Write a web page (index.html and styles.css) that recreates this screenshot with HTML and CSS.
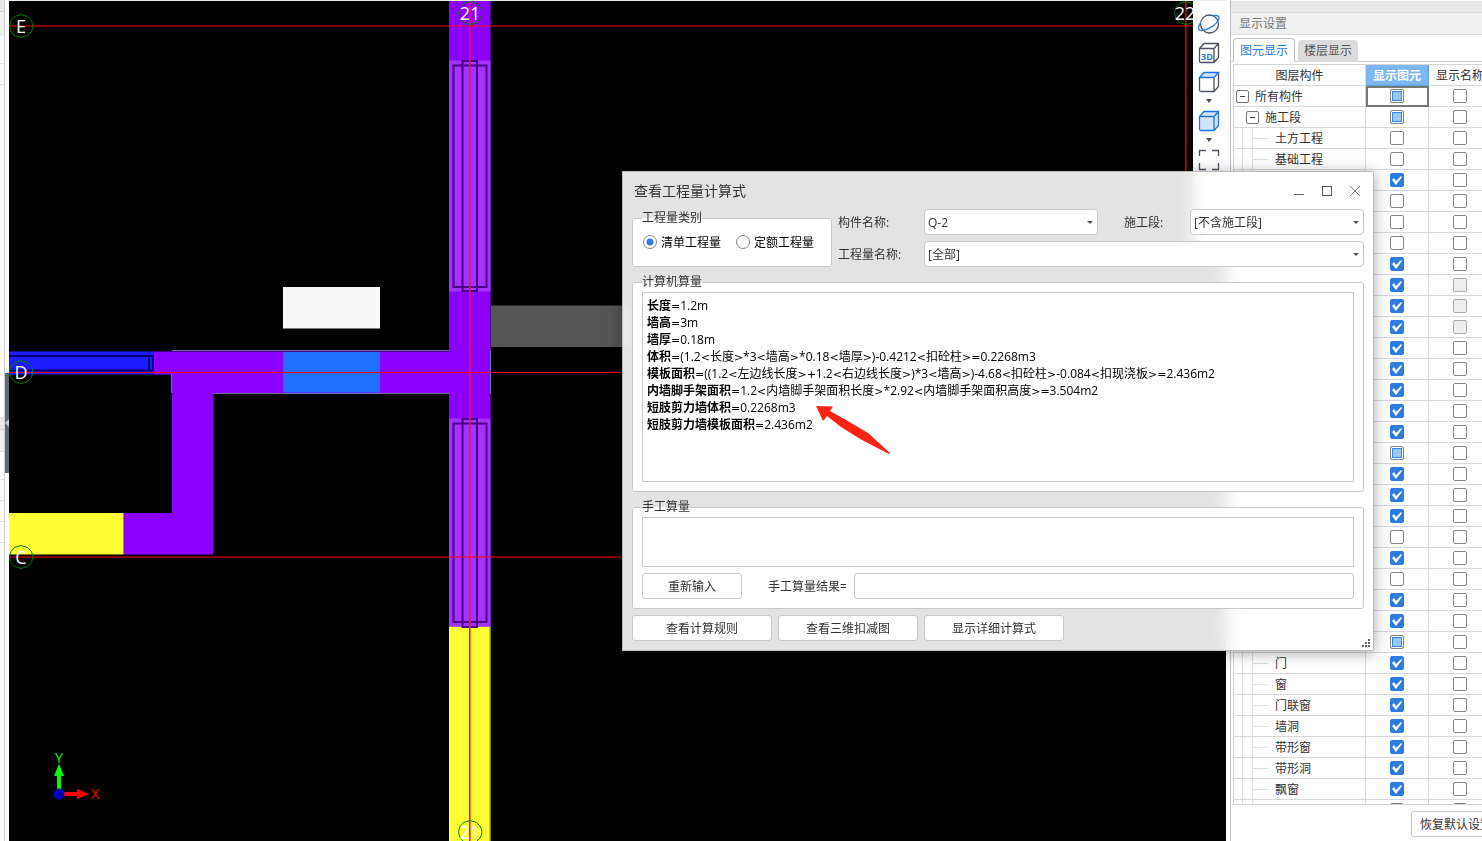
FILE: index.html
```html
<!DOCTYPE html>
<html lang="zh-CN">
<head>
<meta charset="utf-8">
<title>查看工程量计算式</title>
<link rel="stylesheet" href="styles.css">
</head>
<body>
<div class="app">
  <aside class="dock">
    <div class="dock-body">
      <div class="dock-head"></div>
      <div class="dock-search"></div>
      <div class="dock-row"></div>
      <div class="dock-list"></div>
      <div class="dock-head"></div>
      <div class="dock-bar"></div>
      <div class="dock-list dock-list-low"></div>
      <div class="dock-row"></div>
      <div class="dock-row"></div>
      <div class="dock-row"></div>
    </div>
    <div class="dock-handle"><svg width="4" height="8"><path d="M4 0V8L0 4Z" fill="#c8ccd0"/></svg></div>
  </aside>

  <main class="canvas">
    <svg class="plan">
      <g transform="translate(-9 -1)">
        <rect x="449" y="0" width="41.5" height="627" fill="#8b00ff"/>
        <rect x="449" y="626.500" width="41.500" height="220" fill="#ffff33"/>
        <path d="M490 627V841" stroke="#8a8a20"/>
        <rect x="491" y="305.500" width="140" height="41.500" fill="#555"/>
        <rect x="283" y="287" width="97" height="41.500" fill="#f8f8f8"/>
        <path d="M9 351.500H154V375H9Z" fill="#1c1cff"/>
        <path d="M9 374.500H172" stroke="#0a0a80"/>
        <path d="M9 356H153M9 370.500H153M149 356V370M153 355V371" fill="none" stroke="#000078" stroke-width="2"/>
        <path d="M154 351.500H449V393H213.500V554.500H123.500V513H172V374.500H154Z" fill="#8b00ff"/>
        <path d="M172 350.500H490.500V393.500H213M171.500 374V393" fill="none" stroke="#7070a8"/>
        <rect x="449" y="345" width="41" height="60" fill="#8b00ff"/>
        <rect x="283" y="352" width="97" height="40.500" fill="#1f70ff"/>
        <rect x="9" y="513" width="114.500" height="41.500" fill="#ffff33"/>
        <g fill="#a333ff">
          <rect x="449" y="60.500" width="41.500" height="231"/>
          <rect x="449" y="418.500" width="41.500" height="208"/>
        </g>
        <g fill="none" stroke="#4b0089" stroke-width="2">
          <rect x="453.500" y="65.500" width="33" height="221.500"/>
          <rect x="462.500" y="61" width="14.500" height="230"/>
          <rect x="453.500" y="423.500" width="33" height="198.500"/>
          <rect x="462.500" y="419" width="14.500" height="208"/>
        </g>
        <g stroke="#f00" stroke-width="1">
          <path d="M9 26H1226"/>
          <path d="M9 557H1226"/>
          <path d="M9 372.500H1226"/>
        </g>
        <rect x="469" y="0" width="1.600" height="841" fill="#ff1030"/>
        <rect x="1185" y="0" width="1.600" height="300" fill="#d00000"/>
        <g fill="none" stroke="#008000">
          <path id="axis" d="M21 14.500L27.500 16.500L31.500 20.500L33 26L31.500 31.500L27.500 35.500L21 37.500L14.500 35.500L11 31.500L9.500 26L11 20.500L14.500 16.500Z"/>
          <use href="#axis" y="346"/>
          <use href="#axis" y="531"/>
          <use href="#axis" x="449" y="-13"/>
          <use href="#axis" x="449" y="806"/>
          <use href="#axis" x="1165" y="-13"/>
        </g>
        <g class="axis-name">
          <text x="21" y="33">E</text>
          <text x="21" y="379">D</text>
          <text x="21" y="564">C</text>
          <text x="470" y="20">21</text>
          <text x="470" y="839">21</text>
          <text x="1185" y="20">22</text>
        </g>
        <path d="M59 794V774" stroke="#0f0" stroke-width="4"/>
        <path d="M59 764L64 776H54Z" fill="#0f0"/>
        <path d="M59 794H78" stroke="#f00" stroke-width="4"/>
        <path d="M89 794L77 789V799Z" fill="#f00"/>
        <circle cx="59" cy="794" r="5.500" fill="#0000c0"/>
        <text class="ucs" x="59" y="763" fill="#0f0">Y</text>
        <text class="ucs" x="95" y="799" fill="#f00">X</text>
      </g>
    </svg>

    <nav class="tools">
      <button type="button"><svg width="22" height="22" fill="none" stroke="#4c5260" stroke-width="1.300"><circle cx="11.500" cy="11" r="9"/><path d="M2.500 10C-.5 14 0 18 4 17.500C10 17 19 11.500 20.800 6C21.500 3 19 2 15.500 2.500" stroke="#2b7de0"/></svg></button>
      <button type="button"><svg width="22" height="22" fill="none" stroke="#4c5260" stroke-width="1.300"><path d="M1.500 6.500L6 1.500H20.500V15.500L16 20.500H3Q1.500 20.500 1.500 19ZM1.500 6.500H14.500Q16 6.500 16 8V20.500M16 6.500L20.500 1.500"/><text class="cube-name" x="3" y="18">3D</text></svg></button>
      <button type="button"><svg width="22" height="22" fill="none" stroke="#4c5260" stroke-width="1.300"><path d="M1.500 6.500V19Q1.500 20.500 3 20.500H16L20.500 15.500V1.500M16 6.500V20.500"/><path d="M1.500 6.500L6 1.500H20.500L16 6.500Z" fill="#cfe3fa" stroke="#1c74e4"/></svg></button>
      <button type="button" class="more"><svg width="6" height="4"><path d="M0 0H6L3 4Z" fill="#4c5260"/></svg></button>
      <button type="button"><svg width="22" height="22" fill="#cfe3fa" stroke="#1c74e4" stroke-width="1.300"><path d="M1.500 6.500L6 1.500H20.500V15.500L16 20.500H3Q1.500 20.500 1.500 19ZM1.500 6.500H16V20.500M16 6.500L20.500 1.500"/></svg></button>
      <button type="button" class="more"><svg width="6" height="4"><path d="M0 0H6L3 4Z" fill="#4c5260"/></svg></button>
      <button type="button"><svg width="22" height="22" fill="none" stroke="#4c5260" stroke-width="1.300"><path d="M1.500 7V1.500H8M14 1.500H20.500V7M20.500 14V20.500H14M8 20.500H1.500V14"/></svg></button>
    </nav>
  </main>

  <aside class="panel">
    <div class="panel-grip"></div>
    <h2 class="panel-title">显示设置</h2>
    <div class="tabs">
      <button type="button" class="tab tab-on">图元显示</button>
      <button type="button" class="tab">楼层显示</button>
    </div>
    <div class="tree-box">
      <table class="tree">
        <colgroup><col class="col-name"><col class="col-tick"><col class="col-tick"></colgroup>
        <thead><tr><th>图层构件</th><th id="c1" class="picked">显示图元</th><th id="c2">显示名称</th></tr></thead>
        <tbody id="rows"></tbody>
      </table>
    </div>
    <div class="panel-foot"><button type="button" class="btn reset">恢复默认设置</button></div>
  </aside>
</div>

<section class="dialog">
  <header class="dialog-head">
    <h1>查看工程量计算式</h1>
    <button type="button"><svg width="12" height="12"><path d="M1 9.500H11" stroke="#666"/></svg></button>
    <button type="button"><svg width="12" height="12"><rect x="1.500" y="1.500" width="9" height="9" fill="none" stroke="#555"/></svg></button>
    <button type="button"><svg width="12" height="12"><path d="M1 1L11 11M11 1L1 11" stroke="#777"/></svg></button>
  </header>

  <div class="filters">
    <fieldset class="group kinds">
      <legend>工程量类别</legend>
      <label><input type="radio" name="kind" checked><span>清单工程量</span></label>
      <label><input type="radio" name="kind"><span>定额工程量</span></label>
    </fieldset>
    <div class="fields">
      <label for="part">构件名称:</label>
      <div class="combo"><select id="part"><option>Q-2</option></select></div>
      <label for="stage" class="stage">施工段:</label>
      <div class="combo"><select id="stage"><option>[不含施工段]</option></select></div>
      <label for="qty">工程量名称:</label>
      <div class="combo wide"><select id="qty"><option>[全部]</option></select></div>
    </div>
  </div>

  <fieldset class="group">
    <legend>计算机算量</legend>
    <div class="result">
      <p><b>长度</b>=1.2m</p>
      <p><b>墙高</b>=3m</p>
      <p><b>墙厚</b>=0.18m</p>
      <p><b>体积</b>=(1.2&lt;长度&gt;*3&lt;墙高&gt;*0.18&lt;墙厚&gt;)-0.4212&lt;扣砼柱&gt;=0.2268m3</p>
      <p><b>模板面积</b>=((1.2&lt;左边线长度&gt;+1.2&lt;右边线长度&gt;)*3&lt;墙高&gt;)-4.68&lt;扣砼柱&gt;-0.084&lt;扣现浇板&gt;=2.436m2</p>
      <p><b>内墙脚手架面积</b>=1.2&lt;内墙脚手架面积长度&gt;*2.92&lt;内墙脚手架面积高度&gt;=3.504m2</p>
      <p><b>短肢剪力墙体积</b>=0.2268m3</p>
      <p><b>短肢剪力墙模板面积</b>=2.436m2</p>
      <svg class="pointer" width="76" height="50"><path d="M1 1L18 1.500L15 6L31 15L53 28L75 48L74 49L47 35L26 22L12 11L8 16Z" fill="#ff2212"/></svg>
    </div>
  </fieldset>

  <fieldset class="group manual">
    <legend id="manual">手工算量</legend>
    <textarea aria-labelledby="manual"></textarea>
    <div class="manual-row">
      <button type="button" class="btn">重新输入</button>
      <label for="total">手工算量结果=</label>
      <input type="text" id="total">
    </div>
  </fieldset>

  <footer class="actions">
    <button type="button" class="btn">查看计算规则</button>
    <button type="button" class="btn">查看三维扣减图</button>
    <button type="button" class="btn">显示详细计算式</button>
  </footer>
  <svg class="grip" width="8" height="8" fill="#666"><path d="M6 0h2v2H6zM3 3h2v2H3zM6 3h2v2H6zM0 6h2v2H0zM3 6h2v2H3zM6 6h2v2H6z"/></svg>
</section>
<script src="app.js"></script>
</body>
</html>
```
FILE: styles.css
```css
* { box-sizing: border-box; }

body {
  margin: 0;
  color: #333;
  background: #fff;
  font: 12px/18px "Open Sans", "Noto Sans CJK SC", sans-serif;
}

button, input, select, textarea { font: inherit; color: inherit; }
button { padding: 0; border: 0; background: none; }

.app { display: flex; height: 100vh; overflow: hidden; }

/* edge of the left dock */
.dock { display: flex; flex: 0 0 9px; }
.dock-body { width: 5px; border-right: 1px solid #d0d0d0; }
.dock-head { height: 12px; background: #e8e8e8; border-bottom: 1px solid #d0d0d0; }
.dock-search { height: 52px; background: linear-gradient(#f0f0f0 24px, #fff 24px); border-bottom: 1px solid #ddd; }
.dock-row { height: 21px; border-bottom: 1px solid #ddd; }
.dock-list { height: 333px; border-bottom: 1px solid #ddd; }
.dock-bar { height: 22px; background: #f0f0f0; border-bottom: 1px solid #ddd; }
.dock-list-low { height: 28px; }
.dock-handle {
  display: flex;
  align-items: center;
  height: 100px;
  width: 4px;
  margin-top: 373px;
  background: #5f6a76;
}

/* drawing area */
.canvas { position: relative; flex: 1; min-width: 0; background: #000; border-top: 1px solid #e8efe8; }
.plan { display: block; width: 100%; height: 100%; }
.axis-name { font: 18px "Open Sans", sans-serif; fill: #fff; text-anchor: middle; }
.ucs { font: 14px "Open Sans", sans-serif; text-anchor: middle; }
.cube-name { font: bold 9px "Open Sans", sans-serif; fill: #2b7de0; stroke: none; }

.tools {
  position: absolute;
  top: 0;
  right: 0;
  display: flex;
  flex-direction: column;
  align-items: center;
  width: 33px;
  height: 255px;
  padding: 8px 2px 0 0;
  background: #fff;
}
.tools button { display: flex; align-items: center; justify-content: center; height: 29px; width: 100%; }
.tools .more { height: 10px; }

/* display settings */
.panel {
  display: flex;
  flex-direction: column;
  flex: 0 0 252px;
  min-width: 0;
  margin-left: 4px;
  overflow: hidden;
  border-left: 1px solid #c0c0c8;
}
.panel-grip { height: 13px; background: #e8e8e8; border-top: 1px solid #fff; border-bottom: 1px solid #d8d8d8; }
.panel-title {
  margin: 0;
  height: 22px;
  padding-left: 8px;
  font-size: 12px;
  font-weight: 400;
  line-height: 21px;
  color: #777;
  background: #f0f0f0;
  border-bottom: 1px solid #ddd;
}
.tabs {
  display: flex;
  align-items: flex-end;
  gap: 3px;
  height: 27px;
  padding-left: 2px;
  box-shadow: inset 0 -1px #c8c8d0;
}
.tab { width: 60px; height: 22px; color: #555; background: #dcdcdc; border-radius: 3px 3px 0 0; }
.tab-on {
  width: 62px;
  height: 24px;
  color: #2b7de0;
  background: #fff;
  border: 1px solid #c0c0c8;
  border-bottom: 0;
  border-radius: 4px 4px 0 0;
}
.tree-box {
  flex: 1;
  min-height: 0;
  margin: 2px 0 0 2px;
  overflow: hidden;
  border: 1px solid #d4d4d4;
  border-right: 0;
}
.tree { width: 258px; table-layout: fixed; border-collapse: separate; border-spacing: 0; }
.col-name { width: 132px; }
.col-tick { width: 63px; }
.tree th, .tree td {
  height: 21px;
  padding: 0;
  border-right: 1px solid #d8d8d8;
  border-bottom: 1px solid #d8d8d8;
  line-height: 18px;
}
.tree th { padding-top: 2px; font-weight: 400; }
.tree .picked { color: #fff; font-weight: 700; background: #7db6f7; border-color: #5ba2ee; }
.tree .tick { text-align: center; }
.tree .current { outline: 2px solid #777; outline-offset: -2px; }
.node { display: flex; align-items: center; height: 20px; padding-left: 2px; }
.node span { padding-top: 2px; }
.node-1 { padding-left: 12px; }
.node-2 {
  padding-left: 18px;
  background: linear-gradient(#ddd, #ddd) 8px 0 / 1px 100% no-repeat, linear-gradient(#ddd, #ddd) 18px 0 / 1px 100% no-repeat;
}
.node-2::before { content: ""; width: 16px; height: 1px; margin-right: 7px; background: #ddd; }
.fold {
  display: flex;
  align-items: center;
  justify-content: center;
  width: 13px;
  height: 13px;
  margin-right: 6px;
  background: #fff;
  border: 1px solid #777;
  border-radius: 2px;
}
.fold::before { content: ""; width: 5px; height: 1px; background: #444; }

.tick input {
  appearance: none;
  display: block;
  width: 14px;
  height: 14px;
  margin: 0 auto;
  background: #fff;
  border: 1px solid #858585;
  border-radius: 2px;
}
.tick input:checked { background: #2b7de0; border-color: #2b7de0; }
.tick input:checked::after {
  content: "";
  display: block;
  width: 12px;
  height: 12px;
  background: #fff;
  clip-path: polygon(1px 6px, 3px 4px, 5px 7px, 10px 2px, 11px 3px, 5px 11px);
}
.tick input:indeterminate {
  background: #99c9ff;
  box-shadow: inset 0 0 0 1px #fff, inset 0 0 0 2px #2f8af5;
}
.tick input:disabled { background: #eee; border-color: #aaa; }
.panel-foot { flex: 0 0 36px; padding: 6px 0 0 180px; }

.btn {
  width: 140px;
  height: 26px;
  flex: none;
  padding-top: 2px;
  background: #fff;
  border: 1px solid #c8c8c8;
  border-radius: 3px;
}
.reset { width: 90px; }

/* formula window */
.dialog {
  position: absolute;
  left: 622px;
  top: 171px;
  display: flex;
  flex-direction: column;
  gap: 6px;
  width: 752px;
  padding: 0 9px 9px;
  background: rgba(255, 255, 255, .89);
  backdrop-filter: blur(8px);
  border: 1px solid #bbb;
  box-shadow: 0 2px 14px rgba(0, 0, 0, .35);
}
.dialog-head { display: flex; align-items: center; gap: 16px; height: 31px; padding: 6px 2px 0; }
.dialog-head h1 { flex: 1; margin: 0; font-size: 14px; font-weight: 400; }
.dialog-head button { display: flex; }
.dialog-head button:last-child { margin-right: 1px; }

.filters { display: flex; gap: 6px; }
.group { min-width: 0; margin: 0; padding: 1px 9px 9px; background: #fff; border: 1px solid #c8c8c8; border-radius: 3px; }
.group legend { padding: 0; height: 18px; line-height: 18px; }
.kinds { display: flex; gap: 15px; flex: 0 0 200px; height: 58px; padding: 6px 0 0 10px; color: #000; }
.kinds legend { margin-left: -1px; color: #333; }
.kinds label { display: flex; align-items: center; gap: 4px; height: 18px; white-space: nowrap; }
.kinds span { padding-top: 2px; }
.kinds input {
  appearance: none;
  width: 14px;
  height: 14px;
  margin: 0;
  background: #fff;
  border: 1px solid #888;
  border-radius: 50%;
}
.kinds input:checked { background: radial-gradient(#2b7de0 3px, #fff 4px); }

.fields {
  flex: 1;
  display: grid;
  grid-template-columns: 86px 174px 92px 1fr;
  gap: 6px 0;
  align-items: center;
}
.fields label { padding-top: 2px; }
.fields .stage { padding-left: 26px; }
.combo { position: relative; height: 26px; }
.combo::after {
  content: "";
  position: absolute;
  right: 5px;
  top: 12px;
  border: 3px solid transparent;
  border-top-color: #4c5260;
}
.combo select {
  appearance: none;
  width: 100%;
  height: 26px;
  padding: 2px 3px 0;
  background: #fff;
  border: 1px solid #c8c8c8;
  border-radius: 4px;
}
.wide { grid-column: 2 / 5; }

.result {
  position: relative;
  height: 190px;
  padding: 4px;
  color: #000;
  border: 1px solid #c8c8c8;
}
.result p { margin: 0; height: 17px; line-height: 17px; white-space: nowrap; }
.op { font-family: "DejaVu Sans", sans-serif; font-size: 11px; line-height: 1; }
.pointer { position: absolute; left: 172px; top: 112px; }

.manual textarea { display: block; width: 100%; height: 50px; resize: none; border: 1px solid #c8c8c8; background: #fff; }
.manual-row { display: flex; align-items: center; margin-top: 6px; }
.manual-row .btn { width: 100px; margin-right: 26px; }
.manual-row label { width: 86px; padding-top: 2px; white-space: nowrap; }
.manual-row input { flex: 1; min-width: 0; height: 26px; border: 1px solid #c8c8c8; border-radius: 3px; }
.actions { display: flex; gap: 6px; }
.grip { position: absolute; right: 3px; bottom: 3px; }
```
FILE: app.js
```js
// "-" mixed, "1" ticked, "0" clear, "x" disabled
const names = { 0: "所有构件", 1: "施工段", 2: "土方工程", 3: "基础工程", 27: "门", 28: "窗", 29: "门联窗", 30: "墙洞", 31: "带形窗", 32: "带形洞", 33: "飘窗" };
const shown = "--001000111111111-1110101" + "1-11111110";
const body = document.getElementById("rows");

function tick(cell, state, labels) {
  const box = document.createElement("input");
  box.type = "checkbox";
  box.checked = state === "1";
  box.indeterminate = state === "-";
  box.disabled = state === "x";
  box.setAttribute("aria-labelledby", labels);
  cell.className = "tick";
  cell.append(box);
}

[...shown].forEach((state, i) => {
  const row = body.insertRow();
  const depth = Math.min(i, 2);
  const node = document.createElement("div");
  node.className = "node node-" + depth;
  if (depth < 2) {
    const fold = document.createElement("button");
    fold.type = "button";
    fold.className = "fold";
    node.append(fold);
  }
  const label = document.createElement("span");
  label.id = "r" + i;
  label.textContent = names[i] || "";
  node.append(label);
  row.insertCell().append(node);
  tick(row.insertCell(), state, "c1 r" + i);
  tick(row.insertCell(), i > 8 && i < 12 ? "x" : "0", "c2 r" + i);
});
body.rows[0].cells[1].classList.add("current");

// Operators in the formulas use a wider face than the operands
document.querySelectorAll(".result p").forEach((line) => {
  const formula = line.lastChild;
  const parts = formula.textContent.split(/([<>=+])/).filter(Boolean).map((part) => {
    if (!/^[<>=+]$/.test(part)) return part;
    const op = document.createElement("span");
    op.className = "op";
    op.textContent = part;
    return op;
  });
  formula.replaceWith(...parts);
});
```
